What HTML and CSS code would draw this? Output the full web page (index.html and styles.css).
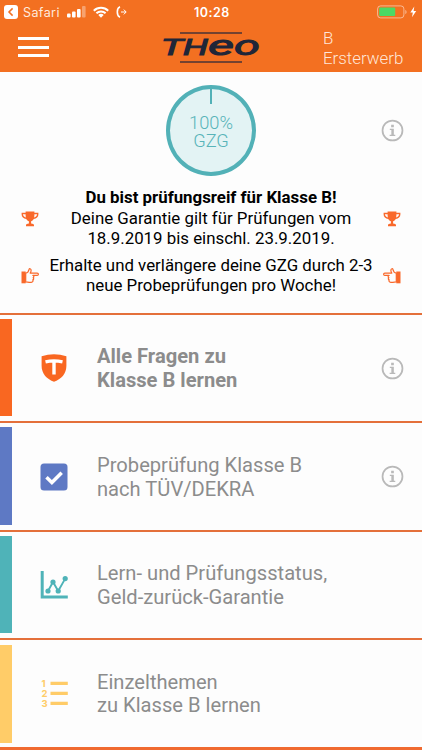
FILE: index.html
```
<!DOCTYPE html>
<html lang="de">
<head>
<meta charset="utf-8">
<title>THEO</title>
<link rel="stylesheet" href="styles.css">
</head>
<body>
<svg class="defs" width="0" height="0">
  <symbol id="info" viewBox="0 0 24 24"><circle cx="12" cy="12" r="10.4" fill="none" stroke="currentColor" stroke-width="1.800"/><path fill="currentColor" d="M10.600 6h2.800v2.500h-2.800zM9.200 10.200h4.200v6.200h1.500v1.400H9v-1.400h1.800v-4.800H9.200z"/></symbol>
  <symbol id="cup" viewBox="0 0 18 16"><path fill="currentColor" d="M4.600.5h8.800v1.200h4v1.800c0 2.400-2 4.100-4.600 4.500-.7 1.200-1.800 1.900-2.700 2.200v2.400c1.700.3 2.900.6 2.900 1.400v1.200H5V14c0-.8 1.200-1.100 2.900-1.400v-2.400C7 9.900 5.900 9.200 5.200 8 2.600 7.600.6 5.900.6 3.500V1.700h4zm0 2.700H1.900c.1 1.600 1.300 2.800 3 3.300-.3-.9-.3-2.200-.3-3.300zm8.800 0c0 1.100 0 2.400-.3 3.300 1.700-.5 2.900-1.700 3-3.300z"/></symbol>
  <symbol id="hand" viewBox="0 0 18 16"><path fill="currentColor" d="M.5 3.500h4.200v11.800H.5z"/><path fill="none" stroke="currentColor" stroke-width="1.200" stroke-linejoin="round" d="M4.700 5.200c1.600-.4 3-2 3.400-3.900.3-.9 1.600-.7 1.900.4.300 1.200-.1 2.400-.8 3.400h7c1.600 0 1.600 2.300 0 2.300h-4.300c1.200.3 1.300 1.900.2 2.300.9.500.8 1.900-.3 2.200.6 1.100-.1 2.400-1.500 2.400-2.200.2-4-.3-5.600-.3z"/></symbol>
</svg>

<header class="top">
  <div class="status">
    <svg class="back" viewBox="0 0 14 14"><rect width="14" height="14" rx="3" fill="#fff"/><path d="M8.600 3.400 5 7l3.600 3.600" fill="none" stroke="#f37021" stroke-width="1.500"/></svg>
    <span class="app">Safari</span>
    <svg class="signal" viewBox="0 0 19 12" fill="#fff"><rect y="7.500" width="3.600" height="4" rx="1"/><rect x="5" y="5.500" width="3.600" height="6" rx="1"/><rect x="10" y="3" width="3.600" height="8.500" rx="1"/><rect x="15" y="0" width="3.600" height="11.500" rx="1" opacity=".35"/></svg>
    <svg class="wifi" viewBox="0 0 16 12" fill="none" stroke="#fff" stroke-width="2"><path d="M.8 4.700a10.300 10.300 0 0 1 14.400 0M3.400 7.300a6.600 6.600 0 0 1 9.200 0"/><path fill="#fff" stroke="none" d="M5.300 9.100a3.900 3.900 0 0 1 5.400 0L8 11.800z"/></svg>
    <svg class="call" viewBox="0 0 11 12" fill="none" stroke="#fff"><path stroke-width="1.600" d="M4 .8C.4 2.400.4 9.600 4 11.200M1.800 1.800h1.700M1.800 10.200h1.700"/><path stroke-width="1" d="M5 6h5M7.800 3.600 10.200 6 7.800 8.400"/></svg>
    <span class="clock">10:28</span>
    <svg class="battery" viewBox="0 0 40 14"><rect x=".6" y=".9" width="26.300" height="12" rx="3" fill="none" stroke="#fff" stroke-opacity=".5"/><rect x="2.200" y="2.600" width="16" height="8.500" rx="1" fill="#4cd964"/><path d="M28.300 5c1.700.5 1.700 3.600 0 4z" fill="#fff" fill-opacity=".5"/><path d="M37.300 1.500 33.300 7.500h2.500l-.8 4.700 4.200-6.300h-2.600z" fill="#fff"/></svg>
  </div>
  <div class="nav">
    <div class="menu"><i></i><i></i><i></i></div>
    <svg class="logo" viewBox="0 0 100 34"><path d="M17 2h62M17 31h62" stroke="#4b3336" stroke-width="1.600"/><text class="caps" x="-2" y="24" textLength="22" lengthAdjust="spacingAndGlyphs">T</text><text class="caps" x="20" y="24" textLength="25" lengthAdjust="spacingAndGlyphs">H</text><text class="small" x="45" y="23.800" textLength="26" lengthAdjust="spacingAndGlyphs">e</text><text class="small" x="71" y="23.800" textLength="26" lengthAdjust="spacingAndGlyphs">o</text></svg>
    <div class="license">B<br>Ersterwerb</div>
  </div>
</header>

<section class="intro">
  <div class="gauge-row">
    <div class="gauge"><span class="tick"></span><span class="value">100%<br>GZG</span></div>
    <svg class="info"><use href="#info"/></svg>
  </div>
  <div class="message">
    <svg class="mark"><use href="#cup"/></svg>
    <p><b>Du bist prüfungsreif für Klasse B!</b><br>Deine Garantie gilt für Prüfungen vom<br>18.9.2019 bis einschl. 23.9.2019.</p>
    <svg class="mark"><use href="#cup"/></svg>
  </div>
  <div class="message second">
    <svg class="mark"><use href="#hand"/></svg>
    <p>Erhalte und verlängere deine GZG durch 2-3<br>neue Probeprüfungen pro Woche!</p>
    <svg class="mark flip"><use href="#hand"/></svg>
  </div>
</section>

<main class="list">
  <div class="item orange">
    <svg class="icon" viewBox="0 0 28 28"><path fill="currentColor" d="M1.600 2.300Q14-1.700 26.400 2.300v9.500C26.400 20 21 25.300 14 27.800 7 25.300 1.600 20 1.600 11.800z"/><path stroke="#fff" stroke-width="3.400" fill="none" d="M5.500 7.800q8.500-1.800 17 0M14 7v13.500"/></svg>
    <div class="label strong">Alle Fragen zu<br>Klasse B lernen</div>
    <svg class="info"><use href="#info"/></svg>
  </div>
  <div class="item blue">
    <svg class="icon" viewBox="0 0 28 28"><rect x=".5" y=".5" width="27" height="27" rx="3.500" fill="currentColor"/><path fill="none" stroke="#fff" stroke-width="3.500" d="m6.500 14.200 5.400 5.300L21.700 9.700"/></svg>
    <div class="label">Probeprüfung Klasse B<br>nach TÜV/DEKRA</div>
    <svg class="info"><use href="#info"/></svg>
  </div>
  <div class="item teal">
    <svg class="icon" viewBox="0 0 28 28"><path fill="none" stroke="currentColor" stroke-width="3" d="M2.200 0v25.900h25.600"/><path fill="none" stroke="currentColor" stroke-width="1.900" d="m8 20 5-9 5.200 9L25.200 7.600"/><g fill="currentColor"><circle cx="8" cy="20" r="2.600"/><circle cx="13" cy="11" r="2.600"/><circle cx="18.200" cy="20" r="2.600"/><circle cx="25.200" cy="7.600" r="2.600"/></g></svg>
    <div class="label">Lern- und Prüfungsstatus,<br>Geld-zurück-Garantie</div>
  </div>
  <div class="item yellow">
    <svg class="icon" viewBox="0 0 28 28"><path stroke="currentColor" stroke-width="3.200" d="M10.500 4.300h17.300M10.500 14.300h17.300M10.500 24.300h17.300"/><g class="digits"><text x="1.600" y="7.500">1</text><text x="1.600" y="17.500">2</text><text x="1.600" y="27.500">3</text></g></svg>
    <div class="label">Einzelthemen<br>zu Klasse B lernen</div>
  </div>
</main>
</body>
</html>
```
FILE: styles.css
```
* { box-sizing: border-box; }
body {
  margin: 0;
  width: 422px;
  height: 750px;
  overflow: hidden;
  background: #fdfdfd;
  font-family: Roboto, sans-serif;
  color: #000;
}
svg { overflow: visible; }
.defs { display: block; position: absolute; }
.top { height: 72px; background: #f37021; color: #fff; }
.status {
  height: 24px;
  display: grid;
  grid-template-columns: 14px 38px 19px 16px 11px 1fr 40px;
  column-gap: 5px;
  align-items: center;
  padding: 0 5px 0 4px;
  font-family: Inter, sans-serif;
  font-size: 12.5px;
}
.status svg { display: block; }
.back { width: 14px; height: 14px; }
.app { letter-spacing: .4px; color: #ffeadd; }
.signal { width: 19px; height: 12px; margin-left: 1px; }
.wifi { width: 16px; height: 12px; margin-left: 3px; }
.call { width: 11px; height: 12px; margin-left: 5px; }
.clock { font-weight: 600; letter-spacing: .5px; padding-left: 67px; }
.battery { width: 40px; height: 14px; }
.nav { height: 48px; display: flex; align-items: flex-start; }
.menu { width: 31px; margin: 13px 0 0 18px; display: grid; gap: 5.500px; }
.menu i { display: block; height: 3px; background: #fff; }
.logo { width: 100px; height: 34px; margin: 7px 0 0 114px; }
.logo text { font-family: Roboto, sans-serif; font-weight: 400; font-style: italic; fill: #1f2638; stroke: #1f2638; stroke-width: 1px; }
.caps { font-size: 21.500px; }
.small { font-size: 27.500px; }
.license { margin: 4px 0 0 60px; font-size: 16.900px; line-height: 20px; font-weight: 300; color: #ffe6d8; }

.intro { height: 241px; padding-top: 13px; }
.gauge-row { display: grid; grid-template-columns: 90px 24px; column-gap: 125px; padding-left: 166px; align-items: center; }
.gauge {
  position: relative;
  width: 90px;
  height: 91px;
  border: 4.5px solid #52b1b7;
  border-radius: 50%;
  background: #e3f3f4;
  color: #58b4b9;
  font-size: 18.300px;
  line-height: 18px;
  font-weight: 300;
  text-align: center;
  display: grid;
  place-items: center;
}
.value { padding-top: 3px; }
.tick { position: absolute; left: 39.500px; top: 0; width: 2px; height: 15px; background: #52b1b7; }
.info { width: 23px; height: 23px; color: #b9b9b9; }
.message { display: grid; grid-template-columns: 18px 1fr 18px; padding: 0 21px; align-items: center; margin-top: 11.400px; }
.message p { margin: 0; text-align: center; white-space: nowrap; justify-self: center; font-size: 16.850px; line-height: 20.200px; }
.message.second { margin-top: 6.600px; }
.mark { width: 18px; height: 16px; color: #f9692b; margin-top: 2px; }
.flip { transform: scaleX(-1); }

.list { display: flex; flex-direction: column; }
.item {
  height: 108.400px;
  flex: none;
  border-top: 2.500px solid #e4703a;
  display: grid;
  grid-template-columns: 28px 285px 24px;
  column-gap: 14px;
  align-items: center;
  position: relative;
  padding-left: 40px;
}
.list::after { content: ""; height: 3px; background: #f06a30; }
.item::before { content: ""; position: absolute; left: 0; top: 4px; bottom: 5px; width: 11.500px; background: currentColor; }
.item.yellow::before { top: 5px; bottom: 4px; }
.icon { width: 28px; height: 28px; }
.label { padding: 2px 0 0 15px; font-size: 20.150px; line-height: 23.700px; color: #8c8c8c; white-space: nowrap; }
.strong { font-weight: 700; }
.orange { color: #f96721; }
.blue { color: #5e79c4; }
.teal { color: #4fb3b8; }
.yellow { color: #ffcc68; }
.digits { font-family: Inter, sans-serif; font-weight: 700; font-size: 9.500px; fill: currentColor; }
```
